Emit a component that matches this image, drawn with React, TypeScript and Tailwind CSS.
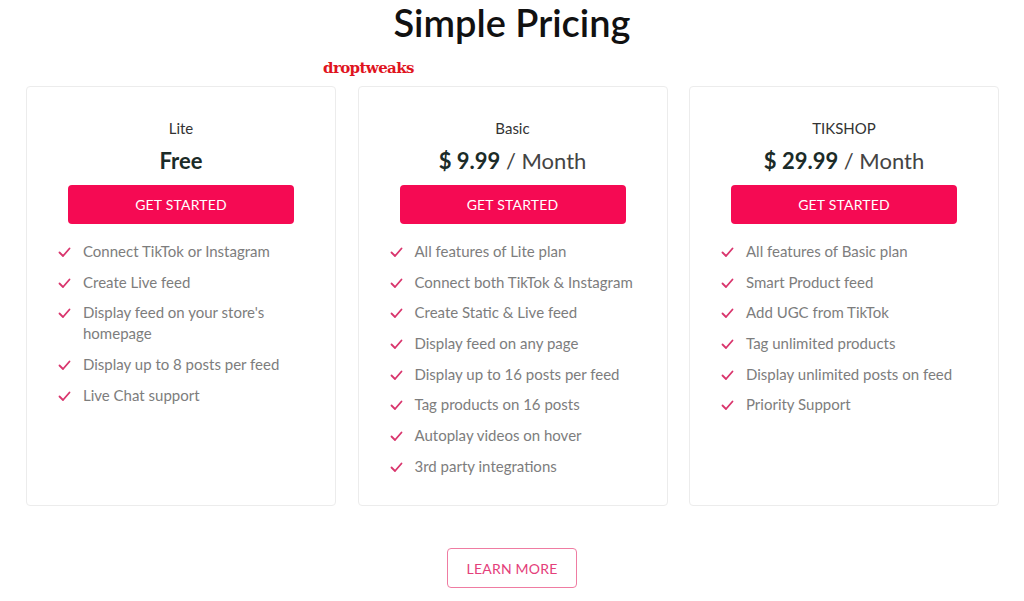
import React from "react";

const plans = [
  {
    name: "Lite",
    price: null as null | string,
    features: [
      "Connect TikTok or Instagram",
      "Create Live feed",
      "Display feed on your store's homepage",
      "Display up to 8 posts per feed",
      "Live Chat support",
    ],
  },
  {
    name: "Basic",
    price: "9.99",
    features: [
      "All features of Lite plan",
      "Connect both TikTok & Instagram",
      "Create Static & Live feed",
      "Display feed on any page",
      "Display up to 16 posts per feed",
      "Tag products on 16 posts",
      "Autoplay videos on hover",
      "3rd party integrations",
    ],
  },
  {
    name: "TIKSHOP",
    price: "29.99",
    features: [
      "All features of Basic plan",
      "Smart Product feed",
      "Add UGC from TikTok",
      "Tag unlimited products",
      "Display unlimited posts on feed",
      "Priority Support",
    ],
  },
];

function Check() {
  return (
    <svg width="13" height="11" viewBox="0 0 13 11" className="mt-[6px] shrink-0">
      <polyline
        points="1.5,5.5 5,9 11.5,1.5"
        fill="none"
        stroke="#d9356d"
        strokeWidth="1.8"
        strokeLinecap="round"
        strokeLinejoin="round"
      />
    </svg>
  );
}

export default function App() {
  return (
    <div className="w-[1024px] h-[601px] bg-white overflow-hidden font-['Lato',sans-serif]">
      <h1 className="text-center text-[38px] leading-[44px] font-semibold text-[#111] pt-0">
        Simple Pricing
      </h1>
      <div className="pl-[323px] mt-[13px] h-[22px] text-[15px] leading-[22px] font-bold text-[#e0141e] font-['DejaVu_Serif',serif] tracking-[-0.6px]">
        droptweaks
      </div>
      <div className="flex gap-[21.5px] pl-[26px] mt-[7px]">
        {plans.map((p) => (
          <div
            key={p.name}
            className="w-[310px] h-[420px] border border-[#ececec] rounded-[4px] bg-white flex flex-col items-center pt-[31px]"
          >
            <div className="text-[15px] leading-[20px] text-[#333] shrink-0">{p.name}</div>
            <div className="mt-[9px] text-[22px] leading-[28px] text-[#444] shrink-0">
              {p.price === null ? (
                <span className="font-bold text-[#1b2b28]">Free</span>
              ) : (
                <>
                  <span className="font-bold text-[#1b2b28]">$ {p.price}</span>
                  <span> / Month</span>
                </>
              )}
            </div>
            <button className="mt-[10px] shrink-0 w-[226px] h-[39px] rounded-[4px] bg-[#f50a53] text-white text-[14px] tracking-[0.2px]">
              GET STARTED
            </button>
            <ul className="self-stretch pl-[31px] pr-[10px] mt-[17px] flex flex-col gap-[9.7px]">
              {p.features.map((f) => (
                <li key={f} className="flex gap-[12px] text-[15px] leading-[21px] text-[#7d7d7d]">
                  <Check />
                  <span className="max-w-[222px]">{f}</span>
                </li>
              ))}
            </ul>
          </div>
        ))}
      </div>
      <div className="flex justify-center mt-[42px]">
        <button className="w-[130px] h-[40px] border border-[#ef7ca2] rounded-[4px] text-[#e4407a] text-[14px] tracking-[0.2px]">
          LEARN MORE
        </button>
      </div>
    </div>
  );
}
